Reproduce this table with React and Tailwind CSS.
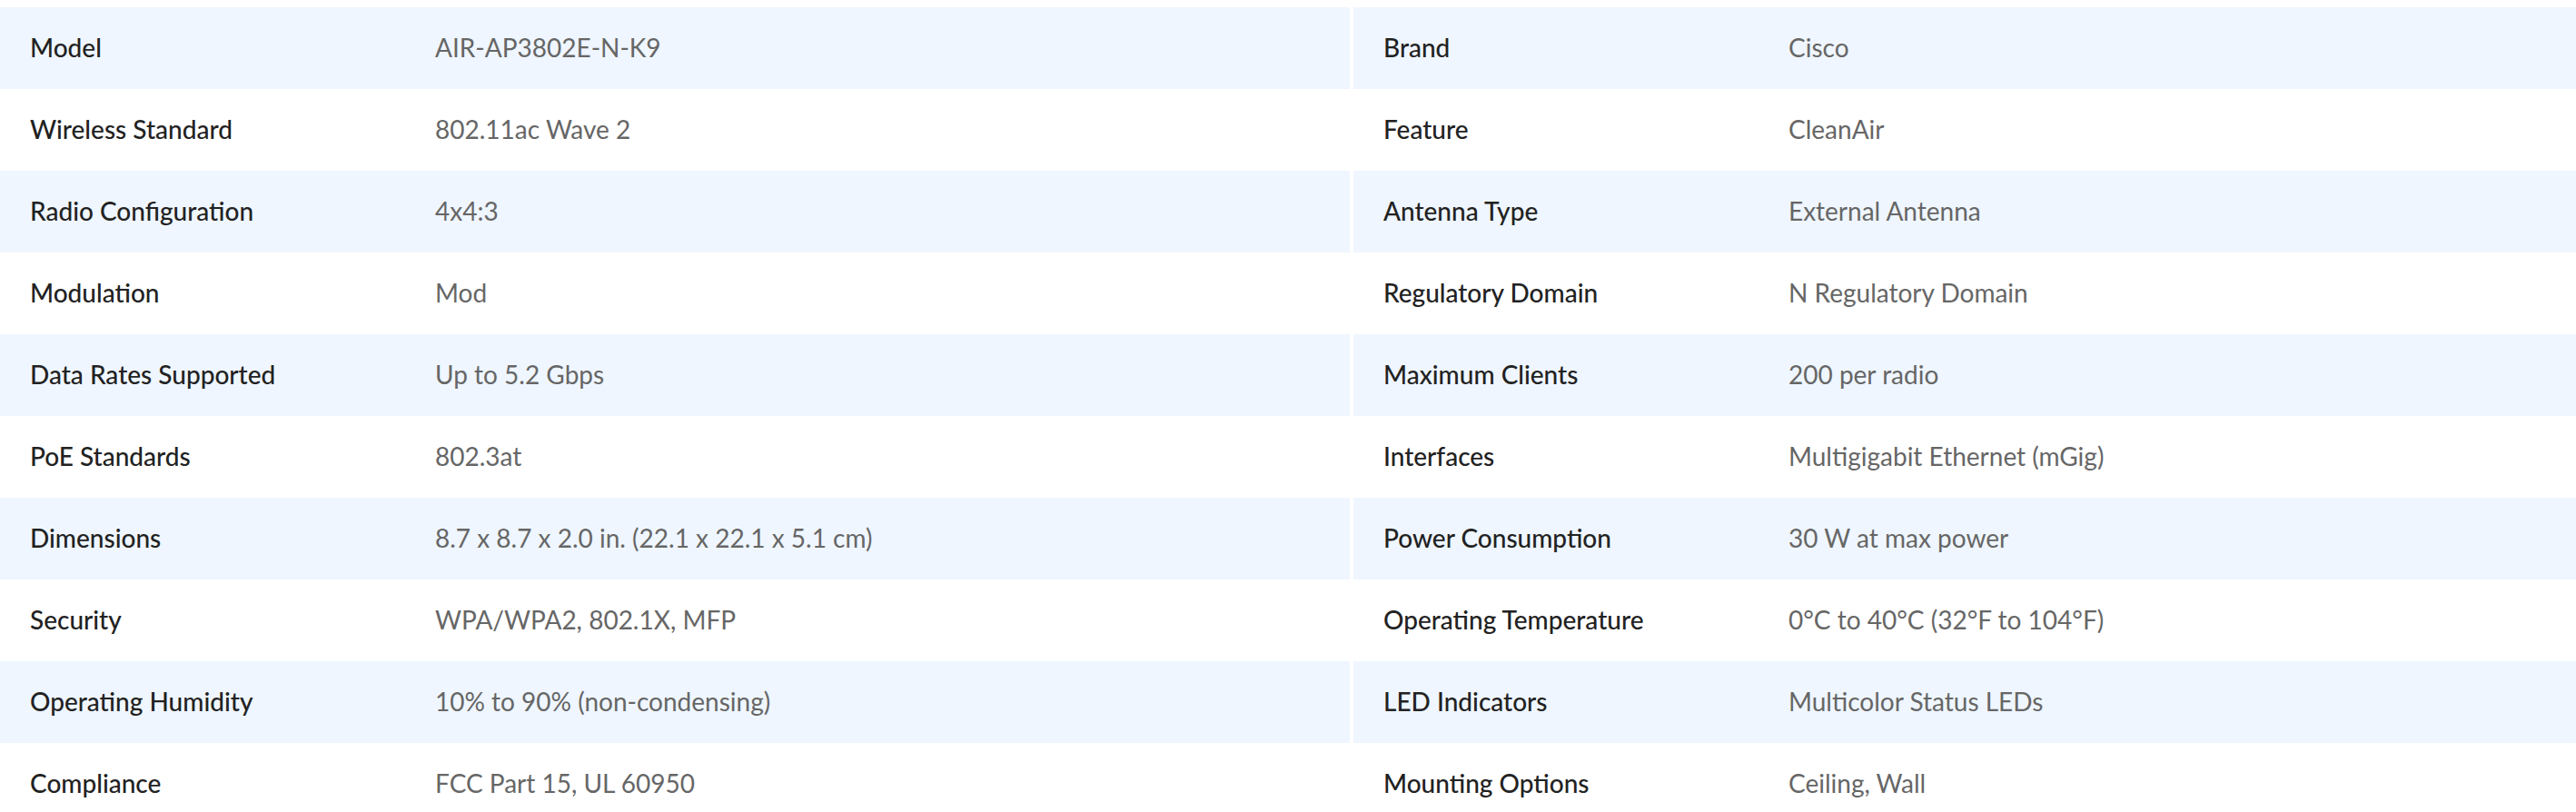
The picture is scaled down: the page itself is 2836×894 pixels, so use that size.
import React from 'react';

const left = [
  ['Model', 'AIR-AP3802E-N-K9'],
  ['Wireless Standard', '802.11ac Wave 2'],
  ['Radio Configuration', '4x4:3'],
  ['Modulation', 'Mod'],
  ['Data Rates Supported', 'Up to 5.2 Gbps'],
  ['PoE Standards', '802.3at'],
  ['Dimensions', '8.7 x 8.7 x 2.0 in. (22.1 x 22.1 x 5.1 cm)'],
  ['Security', 'WPA/WPA2, 802.1X, MFP'],
  ['Operating Humidity', '10% to 90% (non-condensing)'],
  ['Compliance', 'FCC Part 15, UL 60950'],
];

const right = [
  ['Brand', 'Cisco'],
  ['Feature', 'CleanAir'],
  ['Antenna Type', 'External Antenna'],
  ['Regulatory Domain', 'N Regulatory Domain'],
  ['Maximum Clients', '200 per radio'],
  ['Interfaces', 'Multigigabit Ethernet (mGig)'],
  ['Power Consumption', '30 W at max power'],
  ['Operating Temperature', '0°C to 40°C (32°F to 104°F)'],
  ['LED Indicators', 'Multicolor Status LEDs'],
  ['Mounting Options', 'Ceiling, Wall'],
];

function SpecTable({ rows, className }) {
  return (
    <table className={`border-collapse text-left ${className}`}>
      <tbody>
        {rows.map(([label, value], i) => (
          <tr key={label} className={i % 2 === 0 ? 'bg-[#eff6ff]' : 'bg-white'}>
            <th className="h-[90px] w-[479px] pl-[33px] pr-4 pb-[3px] align-middle font-medium text-[#222222]">{label}</th>
            <td className="h-[90px] pr-8 pb-[3px] align-middle font-normal text-[#666666]">{value}</td>
          </tr>
        ))}
      </tbody>
    </table>
  );
}

export default function App() {
  return (
    <div className="min-h-screen bg-white pt-2 text-[28px] leading-none" style={{ fontFamily: 'Lato, "Open Sans", sans-serif' }}>
      <div className="flex gap-[4px]">
        <SpecTable rows={left} className="w-[1486px] shrink-0" />
        <SpecTable rows={right} className="flex-1" />
      </div>
    </div>
  );
}
